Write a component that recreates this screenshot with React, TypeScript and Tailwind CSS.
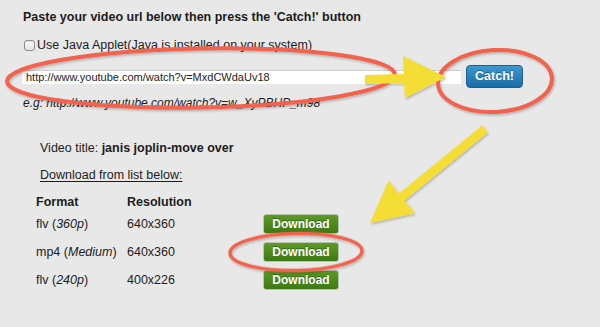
import React from "react";

function Annotations() {
  return (
    <svg
      className="absolute inset-0 pointer-events-none"
      width={600}
      height={327}
      viewBox="0 0 600 327"
    >
      <defs>
        <filter id="sh" x="-10%" y="-10%" width="120%" height="130%">
          <feDropShadow dx="1" dy="1.5" stdDeviation="1" floodColor="#000" floodOpacity="0.25" />
        </filter>
      </defs>
      <g filter="url(#sh)">
        <ellipse cx="201" cy="78" rx="194" ry="29.5" fill="none" stroke="#f2624e" strokeWidth="4" transform="rotate(-1 201 78)" />
        <ellipse cx="495" cy="81" rx="57" ry="31" fill="none" stroke="#f2624e" strokeWidth="4" transform="rotate(-3 495 81)" />
        <ellipse cx="296" cy="252" rx="66" ry="18.5" fill="none" stroke="#f2624e" strokeWidth="3.5" transform="rotate(-1 296 252)" />
        <polygon points="365,75 404,74 403,56 446,77 405,98 404,83 365,84" fill="#f4de36" />
        <polygon points="482.2,125.5 487.8,132.5 404.5,200.5 415,213.3 370,223 388.4,180.7 398.9,193.5" fill="#f4de36" />
      </g>
    </svg>
  );
}

function DownloadButton() {
  return (
    <button className="w-[76px] h-[20px] rounded-[3px] border border-[#b9c4ae] bg-gradient-to-b from-[#5c9b26] to-[#3e7814] text-white font-bold text-[12px] leading-none [text-shadow:0_-1px_0_rgba(0,0,0,0.35)] flex items-center justify-center">
      Download
    </button>
  );
}

export default function App() {
  const rows = [
    { f: "flv", q: "360p", r: "640x360" },
    { f: "mp4", q: "Medium", r: "640x360" },
    { f: "flv", q: "240p", r: "400x226" },
  ];
  return (
    <div className="relative w-[600px] h-[327px] overflow-hidden bg-[#e8e8e8] text-[#1c1c1c] font-['Liberation_Sans',Arial,sans-serif]">
      <div className="flex flex-col pl-[23px] pt-[9px]">
        <div className="text-[12.5px] font-bold leading-[16px]">
          Paste your video url below then press the 'Catch!' button
        </div>
        <div className="mt-[12px] flex items-center h-[16px] text-[12.5px] leading-[16px]">
          <span className="ml-[1px] mr-[2px] w-[11px] h-[11px] rounded-[3px] border border-[#8e8e8e] bg-gradient-to-b from-[#fdfdfd] to-[#e2e2e2] shadow-[inset_0_1px_1px_rgba(0,0,0,0.1)]" />
          <span>Use Java Applet(Java is installed on your system)</span>
        </div>
        <div className="mt-[12px] flex items-center h-[23px] ml-[-1px] gap-[5px]">
          <div className="w-[439px] h-[14px] bg-white border-t border-[#cfcfcf] flex items-center pl-[4px] text-[11px] leading-none text-[#222]">
            http://www.youtube.com/watch?v=MxdCWdaUv18
          </div>
          <button className="w-[57px] h-[23px] rounded-[4px] border border-[#1d5f8e] bg-gradient-to-b from-[#3d98d0] to-[#1b6ca5] text-white font-bold text-[12.5px] leading-none [text-shadow:0_-1px_0_rgba(0,0,0,0.35)] flex items-center justify-center">
            Catch!
          </button>
        </div>
        <div className="mt-[7px] text-[12px] italic leading-[16px]">
          e.g: http://www.youtube.com/watch?v=w_XyPBHP_m98
        </div>
        <div className="mt-[29px] pl-[17px] text-[12.5px] leading-[16px]">
          Video title: <span className="font-bold">janis joplin-move over</span>
        </div>
        <div className="mt-[11px] pl-[17px] text-[12.5px] leading-[16px]">
          <span className="underline underline-offset-2">Download from list below:</span>
        </div>
        <div className="mt-[11px] ml-[13px] grid grid-cols-[91px_136px_76px] grid-rows-[16px_28px_28px_28px] items-center text-[12.5px] leading-[16px]">
          <div className="font-bold">Format</div>
          <div className="font-bold">Resolution</div>
          <div />
          {rows.map((row, i) => (
            <React.Fragment key={i}>
              <div>
                {row.f} (<span className="italic">{row.q}</span>)
              </div>
              <div>{row.r}</div>
              <DownloadButton />
            </React.Fragment>
          ))}
        </div>
      </div>
      <Annotations />
    </div>
  );
}
